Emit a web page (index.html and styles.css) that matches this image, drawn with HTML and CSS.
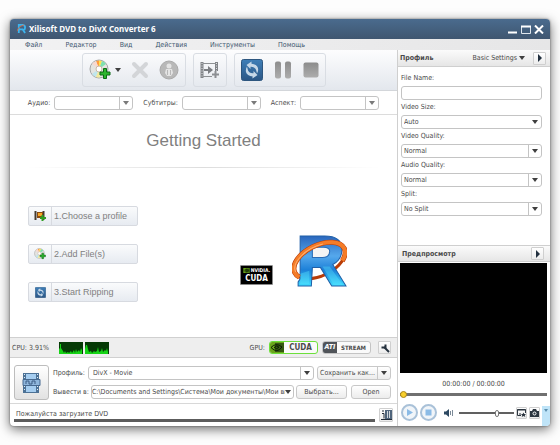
FILE: index.html
```html
<!DOCTYPE html>
<html lang="ru">
<head>
    <meta charset="UTF-8">
    <title>Xilisoft DVD to DivX Converter 6</title>
    <link rel="stylesheet" href="styles.css">
</head>
<body>
    <svg class="defs" width="0" height="0" aria-hidden="true">
        <defs>
            <linearGradient id="blue" x1="0" y1="0" x2="0" y2="1">
                <stop offset="0" stop-color="#3f7fb8"/>
                <stop offset="1" stop-color="#2b5685"/>
            </linearGradient>
            <linearGradient id="gray" x1="0" y1="0" x2="0" y2="1">
                <stop offset="0" stop-color="#8c8c8c"/>
                <stop offset="1" stop-color="#adadad"/>
            </linearGradient>
            <linearGradient id="letter" x1="0" y1="0" x2="0" y2="1">
                <stop offset="0" stop-color="#2a66bd"/>
                <stop offset="0.4" stop-color="#55a8ec"/>
                <stop offset="0.68" stop-color="#1c80d8"/>
                <stop offset="1" stop-color="#3fdcff"/>
            </linearGradient>
            <symbol id="disc" viewBox="0 0 22 22">
                <circle cx="10" cy="10" r="9" fill="#e4e4e0" stroke="#a5a5a5"/>
                <path d="M10 10L7 2a8.500 8.500 0 0 1 3-.5z" fill="#ff9b3d"/>
                <path d="M10 10V1.500a8.500 8.500 0 0 1 3 .5z" fill="#ffe34d"/>
                <path d="M10 10l3-8a8.500 8.500 0 0 1 4 3z" fill="#7fe0b0"/>
                <path d="M10 10L3 5a8.500 8.500 0 0 1 4-3z" fill="#f7d9d0"/>
                <path d="M10 10l-7 5a8.500 8.500 0 0 0 4 3z" fill="#bfe6ee"/>
                <path d="M10 10l-3 8a8.500 8.500 0 0 0 4 .5z" fill="#f3ea9c"/>
                <circle cx="10" cy="10" r="3" fill="#fff" stroke="#c9b9a9"/>
                <path d="M14.500 9.500h3v3.500h3.500v3h-3.500v3.500h-3v-3.500h-3.500v-3h3.500z" fill="#2db52d" stroke="#0a6b14"/>
            </symbol>
            <symbol id="sync" viewBox="0 0 22 22">
                <rect x="0.500" y="0.500" width="21" height="21" rx="2" fill="url(#blue)" stroke="#2d567f"/>
                <path d="M10.500 2.500L5.500 6l4 4V7.700c3-.2 5.500 1.300 6 4.800l.5 2c3-5 0-9.500-5.500-9.700z" fill="#c6d8e8"/>
                <path d="M11.500 19.500l5-3.500-4-4v2.300c-3 .2-5.500-1.300-6-4.800l-.5-2c-3 5 0 9.500 5.500 9.700z" fill="#c6d8e8"/>
            </symbol>
            <symbol id="logo-r" viewBox="0 0 54 52">
                <ellipse cx="27" cy="25" rx="27" ry="15" transform="rotate(-26 27 25)" fill="none" stroke="#b83c08" stroke-width="3"/>
                <path d="M8 1h24c12 0 17 5 17 13 0 7-3 12-9 15l13 21H39L28 32h-8l-1 18H6V46l2-3z" fill="url(#letter)" stroke="#2060a8"/>
                <path d="M20 12h11c4 0 6 2 6 4 0 4-3 6-7 6H20z" fill="#f4f4f4" stroke="#2a6cb5"/>
                <path d="M30 31h7l13 18h-9zM8 38l9-3v13H8z" fill="#5feaff" opacity="0.35"/>
                <g transform="translate(27 25) rotate(-26)" fill="none">
                    <path d="M-25 6Q-27 3-27 0A27 15 0 0 1 27 0Q27 6 20 10" stroke="#b83c08" stroke-width="5"/>
                    <path d="M-25 6Q-27 3-27 0A27 15 0 0 1 27 0Q27 6 20 10" stroke="#f47c28" stroke-width="4"/>
                    <path d="M-26 0A26 14 0 0 1 10-13" stroke="#ffb070"/>
                </g>
            </symbol>
            <symbol id="eye" viewBox="0 0 14 11">
                <rect width="14" height="11" fill="#6aa51b"/>
                <path d="M5 1h9v9H5z" fill="#345810"/>
                <path d="M1 5.500Q6 0 12 5q-5 7-11 .5zM4 5.500Q7 2.500 9 5.200 7 8 4 5.500z" fill="none" stroke="#0c1c04" stroke-width="1"/>
            </symbol>
        </defs>
    </svg>

    <div class="window">
        <header class="titlebar">
            <svg class="app-icon" viewBox="0 0 10 11" aria-hidden="true">
                <path d="M2 10V1h4q3 0 3 3 0 2-2 3l2 3M3 6h4" fill="none" stroke="#3cb4ee" stroke-width="2"/>
                <path d="M0 8Q1 3 8 1" fill="none" stroke="#e0673a" stroke-width="1"/>
            </svg>
            <h1>Xilisoft DVD to DivX Converter 6</h1>
            <div class="window-buttons">
                <button aria-label="Minimize"><svg width="10" height="9" viewBox="0 0 10 9"><path d="M0 7.500h9" stroke="#fff" stroke-width="2"/></svg></button>
                <button aria-label="Maximize"><svg width="10" height="9" viewBox="0 0 10 9"><path d="M0.500 8.500v-7h9v7z" fill="none" stroke="#dfe6ed"/><path d="M0 1.500h10" stroke="#fff" stroke-width="2"/></svg></button>
                <button aria-label="Close"><svg width="10" height="9" viewBox="0 0 10 9"><path d="M1 0.500l8 8M9 0.500l-8 8" stroke="#fff" stroke-width="2"/></svg></button>
            </div>
        </header>
        <nav class="menu">
            <a href="#">Файл</a>
            <a href="#">Редактор</a>
            <a href="#">Вид</a>
            <a href="#">Действия</a>
            <a href="#">Инструменты</a>
            <a href="#">Помощь</a>
        </nav>

        <div class="content">
            <main class="main">
                <div class="toolbar">
                    <div class="tool-group wide">
                        <button class="with-arrow" aria-label="Add DVD"><svg width="22" height="22"><use href="#disc"/></svg><i class="arrow"></i></button>
                        <button aria-label="Remove"><svg width="18" height="18" viewBox="0 0 18 18"><path d="M3 3l12 12M15 3L3 15" stroke="#d3d5d8" stroke-width="4" stroke-linecap="round"/></svg></button>
                        <button aria-label="Info"><svg width="20" height="20" viewBox="0 0 20 20"><circle cx="10" cy="10" r="9" fill="#b8b8b8" stroke="#a9a9a9"/><circle cx="10" cy="6" r="2.500" fill="#e4e4e4"/><path d="M7 9h6l1 4-2 3H8l-2-3z" fill="#e4e4e4"/><path d="M8.500 10v5M11.500 10v5" stroke="#b8b8b8"/></svg></button>
                    </div>
                    <div class="tool-group">
                        <button aria-label="Profile">
                            <svg width="20" height="18" viewBox="0 0 20 18">
                                <path d="M2 1v16M16.500 1v9" stroke="#818488" stroke-width="3"/>
                                <path d="M2 2v15M16.500 2v8" stroke="#e2e4e6" stroke-width="1" stroke-dasharray="1 1.500"/>
                                <path d="M3 2.500h13M3 15.500h9" stroke="#8e9194"/>
                                <path d="M4 8h4V5l5 4-5 4v-3H4z" fill="#7b7e82"/>
                                <path d="M15.500 10v7M12 13.500h7" stroke="#8c8f93" stroke-width="2"/>
                            </svg>
                        </button>
                    </div>
                    <div class="tool-group wide controls">
                        <button aria-label="Convert"><svg width="22" height="22"><use href="#sync"/></svg></button>
                        <button aria-label="Pause"><svg width="18" height="18" viewBox="0 0 18 18"><rect x="1" y="0.500" width="6" height="17" rx="2" fill="url(#gray)"/><rect x="11" y="0.500" width="6" height="17" rx="2" fill="url(#gray)"/></svg></button>
                        <button aria-label="Stop"><svg width="16" height="16" viewBox="0 0 16 16"><rect x="0.500" y="0.500" width="15" height="15" rx="2" fill="url(#gray)"/></svg></button>
                    </div>
                </div>

                <div class="tracks">
                    <label for="audio">Аудио:</label>
                    <span class="select split dim"><select id="audio"><option></option></select></span>
                    <label for="subs">Субтитры:</label>
                    <span class="select split dim"><select id="subs"><option></option></select></span>
                    <label for="aspect">Аспект:</label>
                    <span class="select split dim"><select id="aspect"><option></option></select></span>
                </div>

                <section class="start">
                    <h2>Getting Started</h2>
                    <div class="start-row">
                        <div class="steps">
                            <button><span class="step-icon"><svg width="12" height="12" viewBox="0 0 12 12"><path d="M1.500 1v9M9.500 1v9" stroke="#443c32" stroke-width="2"/><path d="M3 2h6v6H3z" fill="#8a4a12"/><path d="M4 3h4v3H4z" fill="#f5a623"/><path d="M8.500 5v6M6 8h6" stroke="#2f9e22" stroke-width="2"/></svg></span>1.Choose a profile</button>
                            <button><span class="step-icon"><svg width="12" height="12"><use href="#disc"/></svg></span>2.Add File(s)</button>
                            <button><span class="step-icon"><svg width="11" height="11"><use href="#sync"/></svg></span>3.Start Ripping</button>
                        </div>
                        <div class="nvidia"><span><svg width="7" height="5"><use href="#eye"/></svg>NVIDIA.</span><b>CUDA</b></div>
                        <svg class="big-logo" viewBox="0 0 54 52" role="img" aria-label="R"><use href="#logo-r"/></svg>
                    </div>
                </section>

                <div class="usage">
                    <span>CPU: 3.91%</span>
                    <svg class="graph" width="50" height="12" viewBox="0 0 50 12" aria-hidden="true">
                        <path d="M0 0h24v12H0zM26 0h24v12H26z" fill="#053a05"/>
                        <path d="M0 12V7l1-1V2h1v4l2 3 1 2 1-2 1 2 2-1 1 1 2-2 1 2 2-3 1 3 1-4 1 3 2-2 1 2 1-4 1 2v5z" fill="#16d416"/>
                        <path d="M26 12V7l1-4h1l1 4 1 3 2-1 1 2 2-2 1 1 2-1 1-4 1 5 2-1 1-3 1 4 2-2 1 1 1-3 1 4v2z" fill="#16d416"/>
                    </svg>
                    <span class="gpu">GPU:</span>
                    <span class="chip cuda"><svg width="14" height="11"><use href="#eye"/></svg><b>CUDA</b></span>
                    <span class="chip ati"><i>ATI</i><b>STREAM</b></span>
                    <button class="small-button" aria-label="Settings"><svg width="10" height="10" viewBox="0 0 10 10"><path d="M4 4l5 5" stroke="#26323f" stroke-width="2"/><path d="M5.500 1.500v3h-4" fill="none" stroke="#26323f" stroke-width="2"/></svg></button>
                </div>

                <div class="output">
                    <button class="apply" aria-label="Apply profile">
                        <svg width="20" height="20" viewBox="0 0 20 20">
                            <path d="M1 0h16v20H1z" fill="#4c7195"/>
                            <path d="M4 1h10v18H4z" fill="#a5cdf0"/>
                            <path d="M2.500 1v18M15.500 1v18" stroke="#e2edf7" stroke-dasharray="1 2"/>
                            <path d="M1 6.500h17v6H1z" fill="#8fb6dc" stroke="#47698f"/>
                            <path d="M4 8v3M7 8v3M10 8v3M13 8v3M4 8h3M10 8h3M7 11h3" stroke="#3c5d83"/>
                        </svg>
                    </button>
                    <div class="output-rows">
                        <div class="output-row">
                            <label for="profile">Профиль:</label>
                            <span class="select split grow"><select id="profile"><option>DivX - Movie</option></select></span>
                            <button class="button save">Сохранить как...<span><i class="arrow"></i></span></button>
                        </div>
                        <div class="output-row tight">
                            <label for="dest">Вывести в:</label>
                            <span class="select grow path"><select id="dest"><option>C:\Documents and Settings\Система\Мои документы\Мои ви</option></select></span>
                            <button class="button browse">Выбрать...</button>
                            <button class="button open">Open</button>
                        </div>
                    </div>
                </div>

                <footer class="status">
                    <p>Пожалуйста загрузите DVD</p>
                    <button class="small-button" aria-label="Log"><svg width="11" height="10" viewBox="0 0 11 10"><path d="M1 1h2M1 3.500h2v5M0 9.500h11" fill="none" stroke="#222c38"/><path d="M4 0h7v9H4z" fill="#50657c"/><path d="M6 1h1v7H6zM8 1h1v7H8z" fill="#d0d6dc"/></svg></button>
                </footer>
            </main>

            <aside class="side">
                <div class="panel-title">
                    <h3>Профиль</h3>
                    <button class="settings">Basic Settings<i class="arrow"></i></button>
                    <button class="small-button" aria-label="Expand profile"><i class="play"></i></button>
                </div>
                <form class="fields">
                    <label for="name">File Name:</label>
                    <input type="text" id="name">
                    <label for="size">Video Size:</label>
                    <span class="select"><select id="size"><option>Auto</option></select></span>
                    <label for="vq">Video Quality:</label>
                    <span class="select split"><select id="vq"><option>Normal</option></select></span>
                    <label for="aq">Audio Quality:</label>
                    <span class="select split"><select id="aq"><option>Normal</option></select></span>
                    <label for="split">Split:</label>
                    <span class="select split"><select id="split"><option>No Split</option></select></span>
                </form>

                <div class="panel-title preview-title">
                    <h3>Предпросмотр</h3>
                    <button class="small-button" aria-label="Expand preview"><i class="play"></i></button>
                </div>
                <div class="preview">
                    <div class="screen"></div>
                    <p>00:00:00 / 00:00:00</p>
                    <input type="range" class="seek" aria-label="Position" min="0" max="100" value="0">
                </div>
                <div class="player">
                    <button aria-label="Play"><svg width="17" height="17" viewBox="0 0 17 17"><circle cx="8.500" cy="8.500" r="7.500" fill="#f1f5f9" stroke="#a9c1d8" stroke-width="2"/><path d="M6 5l6 3.500L6 12z" fill="#8bbbe6"/></svg></button>
                    <button aria-label="Stop preview"><svg width="17" height="17" viewBox="0 0 17 17"><circle cx="8.500" cy="8.500" r="7.500" fill="#f1f5f9" stroke="#a9c1d8" stroke-width="2"/><path d="M5.500 5.500h6v6h-6z" fill="#8bbbe6"/></svg></button>
                    <button class="mute" aria-label="Mute"><svg width="10" height="8" viewBox="0 0 10 8"><path d="M0 2.500h2L5 0v8L2 5.500H0z" fill="#2d4861"/><path d="M6.500 2v4M8.500 1v6" stroke="#7d8b99"/></svg></button>
                    <input type="range" class="volume" aria-label="Volume" min="0" max="100" value="70">
                    <button class="small-button" aria-label="Snapshot folder"><svg width="9" height="8" viewBox="0 0 9 8"><path d="M4 6.500H0.500v-6h8V4" fill="none" stroke="#2c3640"/><path d="M0 1h9M2 5h2" stroke="#2c3640"/><path d="M6.500 3.500l.8 1.500H9L7.800 6.200 8.300 8l-1.800-1-1.800 1 .5-1.800L4 5h1.700z" fill="#2c3640"/></svg></button>
                    <button class="small-button" aria-label="Snapshot"><svg width="9" height="8" viewBox="0 0 9 8"><path d="M0 2h2l1-2h3l1 2h2v6H0z" fill="#2c3640"/><circle cx="4.500" cy="4.500" r="1.500" fill="none" stroke="#fff"/></svg></button>
                    <button class="more" aria-label="More"><i class="arrow"></i></button>
                </div>
            </aside>
        </div>
    </div>
</body>
</html>
```
FILE: styles.css
```css
*{
    box-sizing: border-box;
}
body{
    margin: 0;
    min-height: 100vh;
    padding: 19px 10px;
    display: flex;
    background-color: #fdfdfd;
    color: #4a4a4a;
    font-family: "DejaVu Sans Condensed", "DejaVu Sans", sans-serif;
    font-size: 7px;
    line-height: 10px;
}
h1, h2, h3, p{
    margin: 0;
}
button{
    display: flex;
    align-items: center;
    justify-content: center;
    padding: 0;
    border: none;
    background: none;
    color: inherit;
    font: inherit;
    white-space: nowrap;
}
svg{
    display: block;
}
.defs{
    position: absolute;
}
.window{
    flex: 1;
    min-width: 0;
    display: flex;
    flex-direction: column;
    background-color: #fff;
    border-radius: 4px;
    box-shadow: 0 3px 12px rgba(0,0,0,0.6), 0 0 2px rgba(0,0,0,0.5);
    overflow: hidden;
}

/* title and menu */
.titlebar{
    display: flex;
    align-items: center;
    height: 20px;
    padding: 0 6px 0 7px;
    background: linear-gradient(#4a6b8e, #3f5670);
    color: #fff;
}
.titlebar h1{
    flex: 1;
    font-family: "Noto Sans", sans-serif;
    font-size: 8px;
    line-height: 12px;
    font-weight: bold;
}
.app-icon{
    width: 9px;
    height: 10px;
    margin-right: 3px;
}
.window-buttons{
    display: flex;
    gap: 3px;
}
.menu{
    display: flex;
    align-items: center;
    gap: 23px;
    height: 11px;
    padding: 0 15px;
    background: linear-gradient(90deg, #f2f2f3, #e6e6e7);
}
.menu a{
    color: #40566e;
    text-decoration: none;
}
.content{
    flex: 1;
    display: flex;
}
.main{
    flex: 1;
    min-width: 0;
    display: flex;
    flex-direction: column;
}

/* toolbar */
.toolbar{
    display: flex;
    justify-content: center;
    align-items: center;
    gap: 7px;
    height: 41px;
    background: linear-gradient(#fdfdfe, #e3e7ed);
    border-bottom: 1px solid #d3d6da;
}
.tool-group{
    display: flex;
    align-items: center;
    justify-content: center;
    width: 34px;
    height: 34px;
    border: 1px solid #d9dde3;
    border-radius: 3px;
}
.tool-group.wide{
    width: auto;
    gap: 10px;
    padding: 0 6px;
}
.tool-group.controls{
    gap: 11px;
}
.with-arrow{
    gap: 4px;
}
.arrow{
    border: 3px solid transparent;
    border-top: 4px solid #3f3f3f;
    border-bottom: none;
}
.tracks{
    display: flex;
    align-items: center;
    justify-content: center;
    gap: 4px;
    height: 24px;
    border-bottom: 1px solid #dcdcdc;
}
.tracks .select{
    width: 79px;
    margin-right: 6px;
}
.tracks .select:last-child{
    margin-right: 0;
}

/* inputs */
.select{
    display: flex;
    align-items: center;
    height: 14px;
    border: 1px solid #c4c4c4;
    border-radius: 3px;
    background-color: #fff;
}
.select select{
    flex: 1;
    min-width: 0;
    height: 12px;
    padding: 0 2px;
    appearance: none;
    border: none;
    background: none;
    color: inherit;
    font: inherit;
    line-height: 12px;
}
.select::after{
    content: "";
    border: 3px solid transparent;
    border-top: 4px solid #3f3f3f;
    border-bottom: none;
    margin: 0 3px;
}
.select.dim::after{
    border-top-color: #7a7a7a;
}
.select.split select{
    border-right: 1px solid #c4c4c4;
}
.grow{
    flex: 1;
    min-width: 0;
}
.button{
    height: 14px;
    border: 1px solid #c8c8c8;
    border-radius: 3px;
    background: linear-gradient(#fff, #ececec);
}
.small-button{
    width: 13px;
    height: 13px;
    border: 1px solid #cfcfcf;
    border-radius: 1px;
    background: linear-gradient(#fff, #ececec);
}

/* start page */
.start{
    flex: 1;
    padding: 16px 18px 20px;
}
.start h2{
    padding-bottom: 16px;
    border-bottom: 1px solid;
    border-image: linear-gradient(90deg, #fff, #ddd, #fff) 1;
    color: #808080;
    font-family: "Liberation Sans", sans-serif;
    font-size: 17px;
    line-height: 20px;
    font-weight: normal;
    text-align: center;
}
.start-row{
    display: flex;
    align-items: flex-end;
    padding: 38px 32px 0 0;
}
.steps{
    display: flex;
    flex-direction: column;
    gap: 18px;
    width: 110px;
    margin-right: auto;
}
.steps button{
    justify-content: flex-start;
    gap: 2px;
    height: 20px;
    border: 1px solid #d7dae0;
    border-radius: 2px;
    background: linear-gradient(#fafbfc, #e7ebf1);
    color: #808080;
    font-family: "Liberation Sans", sans-serif;
    font-size: 9px;
}
.step-icon{
    display: flex;
    align-items: center;
    justify-content: center;
    width: 23px;
    height: 18px;
    border-right: 1px solid #d7dae0;
}
.nvidia{
    display: flex;
    flex-direction: column;
    align-items: center;
    justify-content: center;
    width: 33px;
    height: 20px;
    margin: 0 19px 17px 0;
    border: 1px solid #8b8b8b;
    border-radius: 1px;
    background-color: #000;
    color: #fff;
    font-size: 8px;
    line-height: 9px;
}
.nvidia span{
    display: flex;
    align-items: center;
    gap: 1px;
    font-size: 5px;
    line-height: 7px;
    font-weight: bold;
}
.big-logo{
    width: 55px;
    height: 53px;
    margin-bottom: 14px;
}

/* cpu and gpu */
.usage{
    display: flex;
    align-items: center;
    gap: 4px;
    height: 21px;
    padding: 0 6px 0 2px;
    border-top: 1px solid #d0d0d0;
    border-bottom: 1px solid #d0d0d0;
    background-color: #eee;
}
.graph{
    margin-left: 6px;
}
.gpu{
    margin-left: auto;
}
.chip{
    display: flex;
    align-items: center;
    width: 49px;
    height: 13px;
    border: 1px solid #c4c4c4;
    border-radius: 3px;
    background-color: #fafafa;
    overflow: hidden;
}
.chip b{
    flex: 1;
    text-align: center;
}
.cuda{
    border-color: #6de03c;
    font-size: 8px;
}
.ati{
    font-size: 6px;
    margin-right: 3px;
}
.ati i{
    width: 14px;
    background-color: #505459;
    color: #fff;
    font-size: 7px;
    line-height: 11px;
    font-weight: bold;
    text-align: center;
}

/* output */
.output{
    display: flex;
    align-items: center;
    gap: 4px;
    height: 46px;
    padding: 4px 6px 0 4px;
    border-bottom: 1px solid #d8d8d8;
}
.apply{
    width: 35px;
    height: 35px;
    border: 1px solid #bdbdbd;
    border-radius: 3px;
    background: linear-gradient(#fff, #e2e2e2);
}
.output-rows{
    flex: 1;
    min-width: 0;
    display: flex;
    flex-direction: column;
    gap: 5px;
}
.output-row{
    display: flex;
    align-items: center;
    gap: 3px;
}
.output-row.tight{
    gap: 2px;
}
.output-row select{
    padding: 0 4px;
}
.output-row .path select{
    padding: 0;
}
.path::after{
    margin: 0 2px 0 0;
}
.save{
    justify-content: space-between;
    width: 74px;
    padding-left: 2px;
}
.save span{
    display: flex;
    align-items: center;
    height: 12px;
    padding: 0 3px;
    border-left: 1px solid #c8c8c8;
}
.browse{
    width: 51px;
    margin-right: 2px;
}
.open{
    width: 40px;
}
.status{
    display: flex;
    align-items: center;
    gap: 4px;
    height: 22px;
    padding: 0 4px;
}
.status p{
    flex: 1;
    padding-left: 2px;
    margin-top: 2px;
    line-height: 9px;
    border-bottom: 3px solid #5c5c5c;
}
.status .small-button{
    width: 14px;
    height: 14px;
}

/* right column */
.side{
    display: flex;
    flex-direction: column;
    width: 153px;
    border-left: 1px solid #cfcfcf;
}
.panel-title{
    display: flex;
    align-items: center;
    gap: 8px;
    height: 17px;
    padding: 0 4px 0 2px;
    background: linear-gradient(#fbfbfb, #e6e6e6);
    border-bottom: 1px solid #cfcfcf;
}
.panel-title h3{
    flex: 1;
    font-size: 7px;
    line-height: 10px;
    font-weight: bold;
}
.settings{
    gap: 2px;
}
.play{
    border: 4px solid transparent;
    border-left: 4px solid #22303f;
    border-right: none;
}
.fields{
    flex: 1;
    display: flex;
    flex-direction: column;
    padding: 6px 8px 0 3px;
}
.fields label{
    line-height: 11px;
    margin-bottom: 2px;
}
.fields input{
    height: 14px;
    width: 100%;
    border: 1px solid #c4c4c4;
    border-radius: 3px;
    font: inherit;
}
.fields input, .fields .select{
    margin-bottom: 2px;
}
.preview-title{
    border-top: 1px solid #cfcfcf;
    padding: 0 6px 0 4px;
}
.preview{
    padding: 1px 3px 0 2px;
}
.screen{
    height: 110px;
    background-color: #000;
}
.preview p{
    padding-top: 6px;
    text-align: center;
}
input[type="range"]{
    display: block;
    appearance: none;
    margin: 0;
    background: none;
}
.seek{
    width: 100%;
    height: 10px;
}
.seek::-webkit-slider-runnable-track{
    height: 3px;
    background-color: #707070;
}
.seek::-webkit-slider-thumb{
    appearance: none;
    width: 7px;
    height: 7px;
    margin-top: -2px;
    border: 1px solid #a8841c;
    border-radius: 50%;
    background-color: #f8cf2c;
}
.player{
    display: flex;
    align-items: center;
    gap: 2px;
    height: 27px;
    padding-left: 3px;
}
.mute{
    margin: 0 3px 0 5px;
}
.volume{
    flex: 1;
    min-width: 0;
    height: 10px;
    margin-right: 8px;
}
.volume::-webkit-slider-runnable-track{
    height: 2px;
    background-color: #606060;
}
.volume::-webkit-slider-thumb{
    appearance: none;
    width: 4px;
    height: 7px;
    margin-top: -2px;
    border: 1px solid #777;
    border-radius: 2px;
    background-color: #fff;
}
.player .small-button{
    width: 11px;
    height: 12px;
}
.more{
    align-self: flex-end;
    align-items: flex-start;
    width: 8px;
    height: 20px;
    padding-top: 3px;
    background-color: #bfe4f8;
}
.more .arrow{
    border-width: 3px 2px 0;
    border-top-color: #5b8fae;
}
```
